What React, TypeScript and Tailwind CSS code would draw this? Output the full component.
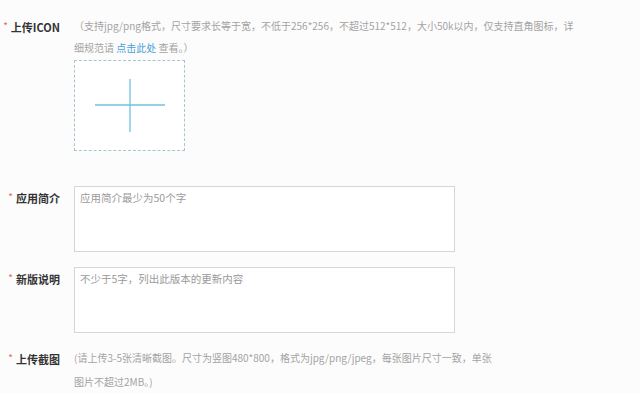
import React from 'react';

const font = { fontFamily: '"Noto Sans CJK SC", "Liberation Sans", sans-serif' };

const Label = ({ text }: { text: string }) => (
  <div className="w-[60px] shrink-0 text-right text-[11px] leading-[22px] font-bold text-[#333]">
    <span className="text-[#e0665c] font-normal mr-[3px] align-[2px] text-[10px]">*</span>
    {text}
  </div>
);

export default function App() {
  return (
    <div className="w-[640px] h-[393px] bg-[#fdfcfd] overflow-hidden" style={font}>
      <div className="flex flex-col pt-[15px]">
        {/* 上传ICON */}
        <div className="flex gap-[14px]">
          <Label text="上传ICON" />
          <div className="flex flex-col">
            <div className="text-[10px] leading-[22px] text-[#a3a3a3] whitespace-nowrap">
              （支持jpg/png格式，尺寸要求长等于宽，不低于256*256，不超过512*512，大小50k以内，仅支持直角图标，详
              <br />
              细规范请 <span className="text-[#4a9fd8]">点击此处</span> 查看。）
            </div>
            <div className="mt-[1px] w-[111px] h-[91px] border border-dashed border-[#a9c3d1] flex items-center justify-center bg-white">
              <svg width="70" height="53" viewBox="0 0 70 53">
                <line x1="0" y1="26" x2="70" y2="26" stroke="#6ec3df" strokeWidth="1.3" />
                <line x1="35" y1="0" x2="35" y2="53" stroke="#6ec3df" strokeWidth="1.3" />
              </svg>
            </div>
          </div>
        </div>

        {/* 应用简介 */}
        <div className="flex gap-[14px] mt-[35px]">
          <Label text="应用简介" />
          <div className="w-[381px] h-[66px] border border-[#d6d6d6] bg-white px-[5px] pt-[1px] text-[10.5px] leading-[20px] text-[#9a9a9a]">
            应用简介最少为50个字
          </div>
        </div>

        {/* 新版说明 */}
        <div className="flex gap-[14px] mt-[15px]">
          <Label text="新版说明" />
          <div className="w-[381px] h-[66px] border border-[#d6d6d6] bg-white px-[5px] pt-[1px] text-[10.5px] leading-[20px] text-[#9a9a9a]">
            不少于5字，列出此版本的更新内容
          </div>
        </div>

        {/* 上传截图 */}
        <div className="flex gap-[14px] mt-[14px]">
          <Label text="上传截图" />
          <div className="text-[10px] leading-[24px] -mt-[1px] text-[#a3a3a3] whitespace-nowrap">
            (请上传3-5张清晰截图。尺寸为竖图480*800，格式为jpg/png/jpeg，每张图片尺寸一致，单张
            <br />
            图片不超过2MB。)
          </div>
        </div>
      </div>
    </div>
  );
}
